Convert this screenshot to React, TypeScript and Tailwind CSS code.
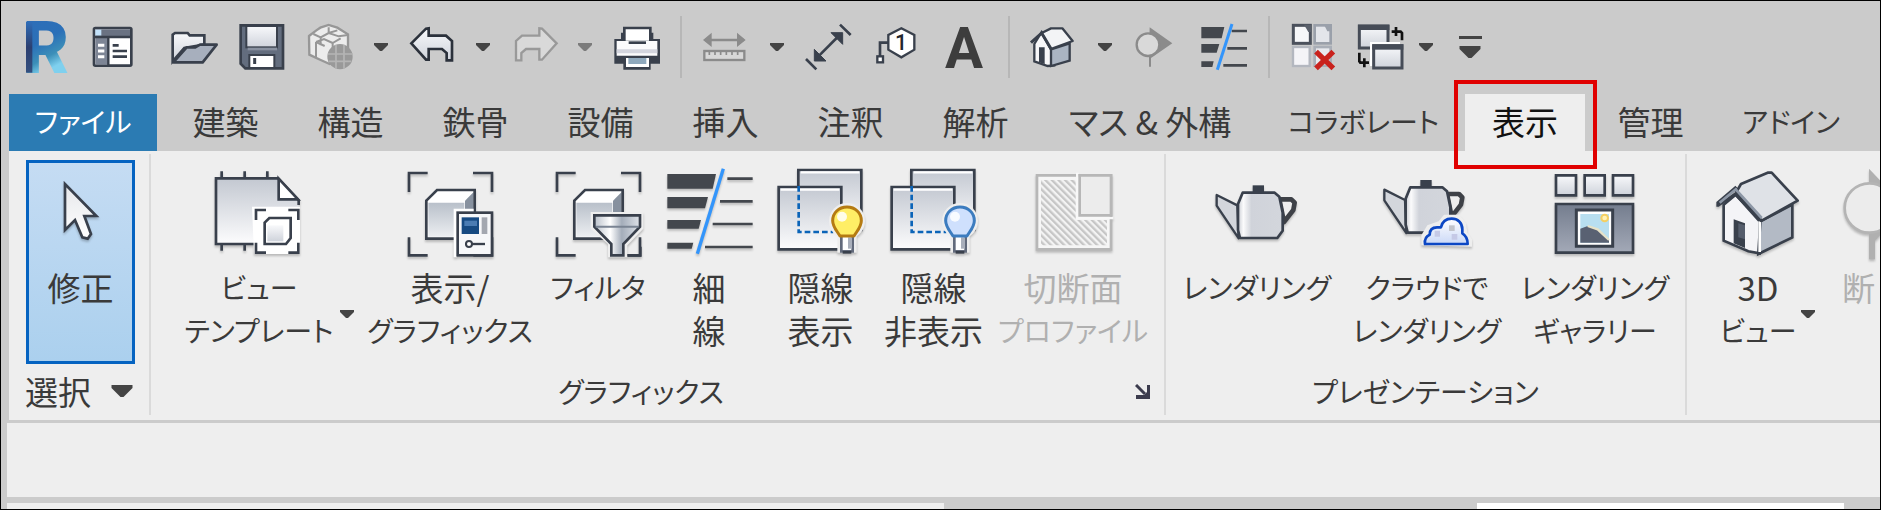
import type { ReactNode } from "react";

const INK = "#39404c";
const GRAY = "#8b8b8b";

type ArtProps = { box: string; children: ReactNode };

function SmallArt({ box, children }: ArtProps) {
  return (
    <svg viewBox={box} className="size-[46px] shrink-0 overflow-visible" fill="none" aria-hidden="true">
      {children}
    </svg>
  );
}

function LargeArt({ box, children }: ArtProps) {
  return (
    <svg
      viewBox={box}
      className="size-[91px] shrink-0 overflow-visible drop-shadow-[0_2px_1px_rgba(0,0,0,0.22)]"
      fill="none"
      aria-hidden="true"
    >
      {children}
    </svg>
  );
}

function Gradients() {
  return (
    <svg className="absolute size-0" aria-hidden="true">
      <defs>
        <linearGradient id="logo" x1="0" y1="0" x2="0.3" y2="1">
          <stop offset="0" stopColor="#2f6db8" />
          <stop offset="0.5" stopColor="#2b70b8" />
          <stop offset="0.7" stopColor="#3c8fb8" />
          <stop offset="0.85" stopColor="#7fd0ee" />
        </linearGradient>
        <linearGradient id="logoDark" x1="0" y1="0" x2="0" y2="1">
          <stop offset="0" stopColor="#2f6db8" />
          <stop offset="0.5" stopColor="#2c3f70" />
          <stop offset="1" stopColor="#34507f" />
        </linearGradient>
        <linearGradient id="face" x1="0" y1="0" x2="0" y2="1">
          <stop offset="0" stopColor="#c3c8d1" />
          <stop offset="1" stopColor="#fcfcfd" />
        </linearGradient>
        <linearGradient id="steel" x1="0" y1="0" x2="0" y2="1">
          <stop offset="0" stopColor="#f8f9fb" />
          <stop offset="1" stopColor="#cfd3db" />
        </linearGradient>
        <linearGradient id="cube" x1="0" y1="0" x2="0" y2="1">
          <stop offset="0" stopColor="#b9c0ca" />
          <stop offset="1" stopColor="#eceef1" />
        </linearGradient>
        <linearGradient id="pot" x1="0" y1="0" x2="1" y2="0">
          <stop offset="0" stopColor="#c9ccd3" />
          <stop offset="0.12" stopColor="#fbfbfc" />
          <stop offset="0.3" stopColor="#d0d3da" />
          <stop offset="1" stopColor="#d3d6dc" />
        </linearGradient>
        <linearGradient id="funnel" x1="0" y1="0" x2="1" y2="0">
          <stop offset="0" stopColor="#b9c0ca" />
          <stop offset="0.35" stopColor="#ffffff" />
          <stop offset="0.6" stopColor="#a4adba" />
          <stop offset="1" stopColor="#dfe3e9" />
        </linearGradient>
        <linearGradient id="slate" x1="0" y1="0" x2="0" y2="1">
          <stop offset="0" stopColor="#747d8e" />
          <stop offset="1" stopColor="#a3a9b7" />
        </linearGradient>
        <linearGradient id="cloud" x1="0" y1="0" x2="0" y2="1">
          <stop offset="0" stopColor="#ffffff" />
          <stop offset="1" stopColor="#cbd9f7" />
        </linearGradient>
        <linearGradient id="pointer" x1="0" y1="0" x2="0" y2="1">
          <stop offset="0" stopColor="#e6e7ea" />
          <stop offset="1" stopColor="#ffffff" />
        </linearGradient>
        <pattern id="hatch" width="14" height="14" patternUnits="userSpaceOnUse" patternTransform="rotate(-45)">
          <rect width="14" height="14" fill="#f3f3f3" />
          <rect width="7" height="14" fill="#c6c6c6" />
        </pattern>
      </defs>
    </svg>
  );
}

/* ---------- quick access icons ---------- */

function LogoIcon() {
  return (
    <SmallArt box="69 66 138 138">
      <text x="68" y="212" fontFamily="Roboto, sans-serif" fontWeight="900" fontSize="214" fill="url(#logo)">R</text>
      <rect x="78" y="60" width="19" height="152" fill="url(#logoDark)" />
    </SmallArt>
  );
}

function PropertiesIcon() {
  return (
    <SmallArt box="270 70 138 138">
      <rect x="279" y="82" width="112" height="113" rx="4" fill="#fff" stroke={INK} strokeWidth="8" />
      <path d="M283 86h104v20H283z" fill="#6a7282" />
      <path d="M283 87h18v18h-18z" fill="#c3e2fa" />
      <path d="M283 112h38v80h-38z" fill="#7d8595" />
      <path d="M279 109h112M322 109v84" stroke={INK} strokeWidth="7" />
      <path d="M291 134h19M291 151h19M291 168h19" stroke="#fff" strokeWidth="9" />
      <path d="M335 134h18M335 151h43M335 168h43" stroke={INK} strokeWidth="8" />
    </SmallArt>
  );
}

function OpenIcon() {
  return (
    <SmallArt box="513 72 138 138">
      <path d="M518 184v-80l7-5h38l6 7h44v28l-60 10z" fill="url(#steel)" stroke={INK} strokeWidth="8" />
      <path d="M520 187l40-45h26l14-8h50l-42 53z" fill="#a7afbd" stroke={INK} strokeWidth="8" strokeLinejoin="round" />
    </SmallArt>
  );
}

function SaveIcon() {
  return (
    <SmallArt box="719 70 138 138">
      <path d="M724 74h127v129H738l-14-14z" fill="#636d7e" stroke={INK} strokeWidth="8" />
      <rect x="741" y="76" width="92" height="64" fill="url(#steel)" stroke={INK} strokeWidth="6" />
      <path d="M745 145h88" stroke="#8991a0" strokeWidth="8" />
      <rect x="750" y="163" width="75" height="39" fill="#fff" stroke={INK} strokeWidth="6" />
      <path d="M766 172v18" stroke={INK} strokeWidth="9" />
    </SmallArt>
  );
}

function CubesIcon() {
  return (
    <SmallArt box="923 68 138 138">
      <path d="M929 104l22-17 12-8 25-8 26 8 32 20v64l-55 25-27-12-34-16z" fill="#ececec" stroke="#979797" strokeWidth="7" />
      <path d="M942 98l22 10 24-13 26-8M964 108v24M988 78v17l30 10 28-4M950 122l24-9 26 12v60M950 122v48M950 122l26 12M1000 125l24-14" stroke="#979797" strokeWidth="6" />
      <circle cx="1022" cy="166" r="38" fill="#999" />
      <path d="M986 158h74M988 180h68M1010 130v72M1034 130v72" stroke="#b5b5b5" strokeWidth="5" />
    </SmallArt>
  );
}

const ARROW_PATH = "M34 128L78 84l8-1v22h52l18 16v58h-16v-22l-14-12H86v32h-8z";

function UndoIcon() {
  return (
    <SmallArt box="27 70 138 138">
      <path d={ARROW_PATH} fill="url(#steel)" stroke="#2b313b" strokeWidth="8" />
    </SmallArt>
  );
}

function RedoIcon() {
  return (
    <SmallArt box="21 70 138 138">
      <g transform="translate(192 0) scale(-1 1)">
        <path d={ARROW_PATH} fill="#d9d9d9" stroke="#999" strokeWidth="7" />
      </g>
    </SmallArt>
  );
}

function PrintIcon() {
  return (
    <SmallArt box="641 70 138 138">
      <path d="M645 115h20V96h97v19h20v74h-28v18h-82v-18h-27z" fill={INK} />
      <path d="M675 82h78v42h-78z" fill="#fff" stroke={INK} strokeWidth="8" />
      <path d="M652 121h122v44H652z" fill="#fbfbfc" />
      <path d="M652 146h122v12H652z" fill="#d3d5de" />
      <path d="M688 126h52" stroke={INK} strokeWidth="8" />
      <path d="M680 172h69v27h-69z" fill="#fff" />
      <path d="M687 172h54v18h-54z" fill="#8fa9bd" />
    </SmallArt>
  );
}

function MeasureIcon() {
  return (
    <SmallArt box="909 70 138 138">
      <path d="M915 118h116" stroke={GRAY} strokeWidth="7" />
      <path d="M909 118l26-22v43zM1037 118l-26-22v43z" fill={GRAY} />
      <rect x="913" y="151" width="120" height="27" fill="#d8d8d8" stroke={GRAY} strokeWidth="7" />
      <path d="M928 154v9M945 154v9M962 154v9M979 154v9M996 154v9M1013 154v9" stroke={GRAY} strokeWidth="5" />
    </SmallArt>
  );
}

function DimensionIcon() {
  return (
    <SmallArt box="15 70 138 138">
      <path d="M52 170l64-64" stroke={INK} strokeWidth="8" />
      <path d="M43 146v35h35zM93 96h35v35z" fill={INK} stroke={INK} strokeWidth="3" />
      <path d="M18 175l31 31M120 72l32 31" stroke={INK} strokeWidth="8" />
    </SmallArt>
  );
}

function TagIcon() {
  return (
    <SmallArt box="222 70 138 138">
      <path d="M270 126h-27v42" stroke={INK} strokeWidth="8" />
      <rect x="235" y="167" width="17" height="18" fill="#fff" stroke={INK} strokeWidth="7" />
      <path d="M307 83l39 20v44l-39 23-39-23v-44z" fill="#fff" stroke={INK} strokeWidth="7" />
      <text x="306" y="149" textAnchor="middle" fontFamily="Roboto, sans-serif" fontWeight="500" fontSize="64" fill="#22262e">1</text>
    </SmallArt>
  );
}

function TextIcon() {
  return (
    <SmallArt box="421 70 138 138">
      <text x="490" y="201" textAnchor="middle" fontFamily="Roboto, sans-serif" fontWeight="700" fontSize="170" fill="#3d3d3d">A</text>
    </SmallArt>
  );
}

function HomeIcon() {
  return (
    <SmallArt box="692 70 138 138">
      <path d="M702 130l22-36 38 52v48l-20 2-40-14z" fill="#f7f7f9" stroke={INK} strokeWidth="7" />
      <path d="M752 146l56-18v52l-56 16z" fill="#aab4c2" stroke={INK} strokeWidth="7" />
      <path d="M724 97l28-14h34l31 38-66 24z" fill="#f3f4f6" stroke={INK} strokeWidth="7" strokeLinejoin="round" />
      <path d="M692 126l32-29 28 47" stroke={INK} strokeWidth="9" />
      <path d="M716 140h17v50l-17-5z" fill={INK} />
    </SmallArt>
  );
}

function SectionIcon() {
  return (
    <SmallArt box="999 70 138 138">
      <path d="M1049 80l68 48-64 44v26h-6v-38z" fill={GRAY} />
      <circle cx="1044" cy="132" r="34" fill="#d9d9d9" stroke={GRAY} strokeWidth="7" />
    </SmallArt>
  );
}

function ThinLinesSmallIcon() {
  return (
    <SmallArt box="1 70 138 138">
      <path d="M2 79h69l-8 34H2zM2 130h54l-8 26H2zM2 182h37l-4 17H2z" fill="#43474d" />
      <path d="M93 91h46M80 143h59M68 194h71" stroke="#43474d" strokeWidth="8" />
      <path d="M94 70L50 207" stroke="#3395fb" strokeWidth="9" />
    </SmallArt>
  );
}

function CloseHiddenIcon() {
  return (
    <SmallArt box="273 70 138 138">
      <rect x="344" y="74" width="48" height="54" fill="#e3e5ea" stroke="#9aa0aa" strokeWidth="8" />
      <rect x="279" y="139" width="50" height="57" fill="#f4f4f7" stroke="#b3b7bf" strokeWidth="7" />
      <rect x="344" y="139" width="48" height="56" fill="#e8e9ee" stroke="#a9aeb7" strokeWidth="8" />
      <rect x="280" y="74" width="51" height="54" fill="#f6f7f9" stroke="#4b515c" strokeWidth="9" />
      <path d="M312 72h22v22h-9z" fill="#5a606b" />
      <path d="M372 72h20v20h-10z" fill="#9aa0aa" />
      <path d="M348 153l52 50M400 153l-52 50" stroke="#c9221d" strokeWidth="16" />
    </SmallArt>
  );
}

function SwitchWindowsIcon() {
  return (
    <SmallArt box="475 70 138 138">
      <rect x="476" y="76" width="86" height="66" fill="url(#steel)" stroke="#464c57" strokeWidth="9" />
      <path d="M472 80h94" stroke="#464c57" strokeWidth="16" />
      <path d="M508 124h90v12h-82v60h-8z" fill="#fff" />
      <rect x="519" y="135" width="85" height="67" fill="url(#steel)" stroke="#464c57" strokeWidth="9" />
      <path d="M515 139h93" stroke="#464c57" strokeWidth="16" />
      <path d="M586 79v27M573 93h27l4 4v22M476 156v26l3 4h26M491 173v27" stroke="#111" strokeWidth="8" />
    </SmallArt>
  );
}

/* ---------- ribbon icons ---------- */

function ModifyIcon() {
  return (
    <LargeArt box="104 54 273 273">
      <path d="M194 102v138l30-30 22 52 16 4 10-14-20-54h36z" fill="url(#pointer)" stroke={INK} strokeWidth="8" />
    </LargeArt>
  );
}

function ViewTemplateIcon() {
  return (
    <LargeArt box="640 54 273 273">
      <path d="M646 85h186l62 66v130H646z" fill="url(#face)" />
      <path d="M760 282H646V85h186l62 66v14" stroke={INK} strokeWidth="8" />
      <path d="M834 86v62h58z" fill="#fff" stroke={INK} strokeWidth="8" />
      <path d="M663 64v20M732 64v20M800 64v20M663 282v20M732 282v20" stroke={INK} strokeWidth="8" />
      <path d="M754 170h144v142H760z" fill="#fff" />
      <path d="M766 210v-30h30M863 180h30v30M893 278v30h-30M796 308h-30v-30" stroke={INK} strokeWidth="8" />
      <path d="M792 218l14-14h64v60l-14 18h-64z" fill="#fff" stroke={INK} strokeWidth="8" />
      <path d="M800 226h48v48h-48z" fill="url(#steel)" />
    </LargeArt>
  );
}

function Cube({ x = 0 }: { x?: number }) {
  return (
    <g transform={`translate(${x} 0)`}>
      <path d="M206 126V69h56M398 69h57v57M455 262v54h-56M262 316h-56v-54" stroke={INK} strokeWidth="8" />
      <path d="M258 152l32-32h113v110l-30 36H258z" fill="#fff" />
      <path d="M264 158h108v102H264z" fill="url(#cube)" />
      <path d="M374 152l26-26v104l-26 26z" fill="#87919f" />
      <path d="M258 152l32-32h113v110l-30 36H258z" stroke={INK} strokeWidth="8" />
    </g>
  );
}

function GraphicsIcon() {
  return (
    <LargeArt box="194 54 273 273">
      <Cube />
      <path d="M340 176h60v10h-50v136h-10z" fill="#fff" />
      <rect x="352" y="188" width="103" height="128" fill="#f6f7f9" stroke={INK} strokeWidth="8" />
      <path d="M364 202h52v50h-52z" fill="#174a82" />
      <path d="M372 212h38v16h-38z" fill="#4b7cb3" />
      <path d="M424 202h17v50h-17z" fill="#a3a7b0" />
      <path d="M374 282h60" stroke={INK} strokeWidth="7" />
      <circle cx="386" cy="282" r="9" fill="#fff" stroke={INK} strokeWidth="6" />
    </LargeArt>
  );
}

function FilterIcon() {
  return (
    <LargeArt box="637 54 273 273">
      <Cube x={443} />
      <path d="M750 186h158v50l-48 50v36h-58v-40l-52-46z" fill="#eee" />
      <path d="M899 290v26h-38" stroke={INK} strokeWidth="8" />
      <path d="M761 196h137v34l-50 52v34h-36v-34l-51-52z" fill="url(#funnel)" stroke={INK} strokeWidth="8" />
      <path d="M765 230h129" stroke="#7a8493" strokeWidth="6" />
    </LargeArt>
  );
}

function ThinLinesIcon() {
  return (
    <LargeArt box="968 54 273 273">
      <path d="M978 72h146l-10 44H978zM978 141h122l-9 34H978zM978 210h101l-7 26H978zM978 278h78l-5 18H978z" fill="#43474d" />
      <path d="M1158 86h76M1136 154h98M1114 222h120M1091 291h143" stroke="#43474d" strokeWidth="8" />
      <path d="M1146 56l-78 255" stroke="#3395fb" strokeWidth="10" />
    </LargeArt>
  );
}

function HiddenLinesIcon({ lit }: { lit: boolean }) {
  const rim = lit ? "#b57b12" : "#3c7cbf";
  const glass = lit ? "#ffee66" : "#cfe0fd";
  return (
    <LargeArt box="75 54 273 273">
      <path d="M145 60h189v180H145z" fill="url(#face)" stroke={INK} strokeWidth="8" />
      <path d="M86 111h188v187H86z" fill="url(#face)" stroke={INK} strokeWidth="8" />
      <path d="M92 119h176M152 67h176" stroke="#fff" strokeWidth="7" />
      <path d="M146 108v138h104" stroke="#0b64b8" strokeWidth="8" strokeDasharray="17 9" />
      <circle cx="291" cy="213" r="54" fill="#eee" />
      <path d="M262 250h58v58h-58z" fill="#eee" />
      <path d="M274 254h34v50h-34z" fill="#fff" stroke="#626a7b" strokeWidth="8" />
      <path d="M294 262h12v34h-12z" fill="#a9afbb" />
      <path d="M278 307h26" stroke={INK} strokeWidth="8" />
      <path d="M291 171c25 0 43 18 43 41 0 18-12 30-22 46h-42c-10-16-22-28-22-46 0-23 18-41 43-41z" fill={glass} stroke={rim} strokeWidth="9" strokeLinejoin="round" />
      <circle cx="276" cy="200" r="15" fill="#fff" opacity="0.85" />
    </LargeArt>
  );
}

function CutProfileIcon() {
  return (
    <LargeArt box="835 54 273 273">
      <path d="M862 76h222v222H862z" fill="#f6f6f6" stroke="#b7b7b7" strokeWidth="8" />
      <path d="M874 90h104v120h94v76H874z" fill="url(#hatch)" />
      <path d="M990 76h94v120h-94z" fill="#ececec" />
      <path d="M983 68v136h108" stroke="#f8f8f8" strokeWidth="8" />
      <path d="M990 76h94v120h-94z" stroke="#b7b7b7" strokeWidth="8" />
    </LargeArt>
  );
}

function Teapot() {
  return (
    <g strokeLinejoin="round">
      <path d="M386 148h36l10 10-4 22-28 36z" fill="#eee" stroke="#3e4147" strokeWidth="14" />
      <path d="M260 166l-62-31v32l66 98z" fill="#d3d6dc" stroke={INK} strokeWidth="7" />
      <path d="M276 128h96l14 12 10 48v54l-16 22H268l-6-24v-78z" fill="url(#pot)" stroke={INK} strokeWidth="8" />
      <path d="M306 106h34v20h-34z" fill={INK} />
    </g>
  );
}

function RenderIcon() {
  return (
    <LargeArt box="184 54 273 273">
      <Teapot />
    </LargeArt>
  );
}

function CloudRenderIcon() {
  return (
    <LargeArt box="694 54 273 273">
      <g transform="translate(503 -16)">
        <Teapot />
      </g>
      <path d="M812 286v-30l18-30 34-12 16-20h46l20 26 4 28 14 20v22z" fill="#eee" />
      <path d="M823 282c-2-16 4-24 14-28 0-14 8-22 22-22h12c4-18 14-26 32-26s32 12 32 32v12c10 6 16 16 16 32z" fill="url(#cloud)" stroke="#0c47c4" strokeWidth="8" strokeLinejoin="round" />
      <path d="M852 242h16v18h-16zM903 252h17v17h-17z" fill="#c5c9e6" />
      <path d="M895 226h17v17h-17z" fill="#c2c4cb" />
    </LargeArt>
  );
}

function GalleryIcon() {
  return (
    <LargeArt box="146 54 273 273">
      <path d="M164 76h60v60h-60zM250 76h60v60h-60zM335 76h60v60h-60z" fill="url(#steel)" stroke={INK} strokeWidth="8" />
      <path d="M164 162h231v146H164z" fill="url(#slate)" stroke={INK} strokeWidth="8" />
      <path d="M225 180h109v109H225z" fill="#fff" stroke={INK} strokeWidth="9" />
      <path d="M237 192h86v86h-86z" fill="#b8dff0" />
      <path d="M237 236l22-8 30 10 34 32v8h-86z" fill="#596172" />
      <path d="M259 228l30 10 34 32" stroke="#e6e2c8" strokeWidth="7" />
      <circle cx="310" cy="204" r="10" fill="#fff3b8" stroke="#f5cf62" strokeWidth="6" />
    </LargeArt>
  );
}

function House3DIcon() {
  return (
    <LargeArt box="636 54 273 273">
      <path d="M668 164l36-30 72 80v96l-34-6-74-32z" fill="#f4f4f7" stroke={INK} strokeWidth="8" />
      <path d="M778 214l96-50v98l-102 50z" fill="#b3bac5" stroke={INK} strokeWidth="8" />
      <path d="M776 214v92" stroke="#fff" strokeWidth="8" />
      <path d="M698 208l34 12v74l-34-14z" fill={INK} />
      <path d="M712 220l20 6v42l-20-6z" fill="#555d6c" />
      <path d="M706 126l14-24 80-34h12l78 84-108 60z" fill="#dfe2e7" stroke={INK} strokeWidth="8" strokeLinejoin="round" />
      <path d="M650 170v-12l56-48M652 166l50-34 80 82" stroke={INK} strokeWidth="8" />
      <path d="M656 158l48-40 78 86" stroke="#8d97a6" strokeWidth="8" />
    </LargeArt>
  );
}

function SectionLargeIcon() {
  return (
    <LargeArt box="1026 54 273 273">
      <path d="M1107 56l110 116-92 100v56h-18z" fill="#b0b0b0" />
      <circle cx="1108" cy="174" r="74" fill="#ececec" stroke="#b4b4b4" strokeWidth="8" />
    </LargeArt>
  );
}

/* ---------- shared parts ---------- */

function Caret({ faded = false, wide = false }: { faded?: boolean; wide?: boolean }) {
  return (
    <svg viewBox="0 0 14 8" className={wide ? "h-3 w-[22px]" : "h-2 w-[14px]"} aria-hidden="true">
      <path d="M0 0h14v2L8 8H6L0 2z" fill={faded ? "#7c7c7c" : "#444"} />
    </svg>
  );
}

function ToolButton({ label, children }: { label: string; children: ReactNode }) {
  return (
    <button aria-label={label} className="flex h-[70px] w-[68px] shrink-0 items-center justify-center">
      {children}
    </button>
  );
}

function ToolCaret({ label, faded }: { label: string; faded?: boolean }) {
  return (
    <button aria-label={label} className="flex h-[70px] w-[34px] shrink-0 items-center justify-center">
      <Caret faded={faded} />
    </button>
  );
}

function ToolDivider() {
  return <div className="mx-[10px] h-[62px] w-[2px] shrink-0 bg-[#b7b7b7]" />;
}

const KANA = /^[\u3041-\u30ff\n]+$/;

function Line({ text }: { text: string }) {
  return (
    <span
      className={
        KANA.test(text)
          ? "block text-[28px] leading-[43px] whitespace-pre-line"
          : "block text-[33px] leading-[43px] whitespace-pre-line"
      }
    >
      {text}
    </span>
  );
}

type CommandProps = { width: string; lines: string[]; icon: ReactNode; disabled?: boolean };

function Command({ width, lines, icon, disabled = false }: CommandProps) {
  return (
    <button
      disabled={disabled}
      className={`${width} flex shrink-0 flex-col items-center gap-[7px] ${disabled ? "text-[#b0b0b0]" : ""}`}
    >
      {icon}
      <span className="block">
        {lines.map((line) => (
          <Line key={line} text={line} />
        ))}
      </span>
    </button>
  );
}

function Panel({ width, title, children }: { width: string; title: ReactNode; children: ReactNode }) {
  return (
    <section className={`${width} flex flex-col border-r-2 border-[#dadada]`}>
      <div className="flex h-[213px] items-start pt-[14px]">{children}</div>
      <div className="flex h-[48px] items-center justify-center">{title}</div>
    </section>
  );
}

const TABS = ["建築", "構造", "鉄骨", "設備", "挿入", "注釈", "解析"];

export default function App() {
  return (
    <div
      lang="ja"
      className="relative flex w-full flex-col overflow-hidden border border-black bg-[#cbcbcb] font-['Noto_Sans_CJK_JP',sans-serif] text-[#3a3a3a] [font-feature-settings:'palt']"
    >
      <Gradients />

      <header className="flex h-[93px] items-center pb-[2px] pl-[11px]">
        <ToolButton label="アプリケーション"><LogoIcon /></ToolButton>
        <ToolButton label="プロパティ"><PropertiesIcon /></ToolButton>
        <div className="w-3 shrink-0" />
        <ToolButton label="開く"><OpenIcon /></ToolButton>
        <ToolButton label="保存"><SaveIcon /></ToolButton>
        <ToolButton label="同期"><CubesIcon /></ToolButton>
        <ToolCaret label="同期のオプション" />
        <ToolButton label="元に戻す"><UndoIcon /></ToolButton>
        <ToolCaret label="元に戻す履歴" />
        <ToolButton label="やり直し"><RedoIcon /></ToolButton>
        <ToolCaret label="やり直し履歴" faded />
        <ToolButton label="印刷"><PrintIcon /></ToolButton>
        <ToolDivider />
        <ToolButton label="計測"><MeasureIcon /></ToolButton>
        <ToolCaret label="計測のオプション" />
        <ToolButton label="寸法"><DimensionIcon /></ToolButton>
        <ToolButton label="タグ"><TagIcon /></ToolButton>
        <ToolButton label="文字"><TextIcon /></ToolButton>
        <ToolDivider />
        <ToolButton label="3D ビュー"><HomeIcon /></ToolButton>
        <ToolCaret label="3D ビューのオプション" />
        <ToolButton label="断面"><SectionIcon /></ToolButton>
        <ToolButton label="細線"><ThinLinesSmallIcon /></ToolButton>
        <ToolDivider />
        <ToolButton label="非表示ウィンドウを閉じる"><CloseHiddenIcon /></ToolButton>
        <ToolButton label="ウィンドウ切り替え"><SwitchWindowsIcon /></ToolButton>
        <button aria-label="ウィンドウ一覧" className="flex h-[70px] w-5 shrink-0 items-center justify-center">
          <Caret />
        </button>
        <button aria-label="カスタマイズ" className="flex h-[70px] w-[68px] shrink-0 flex-col items-center justify-center gap-[7px]">
          <span className="h-[3px] w-[23px] bg-[#444]" />
          <Caret wide />
        </button>
      </header>

      <nav className="flex h-[57px] items-stretch pl-2 text-[33px] leading-[50px] whitespace-nowrap">
        <button className="mr-[6px] w-[148px] shrink-0 bg-[#2b7bb3] pb-1 text-[28px] text-white">ファイル</button>
        {TABS.map((tab) => (
          <button key={tab} className="w-[125px] shrink-0 pb-1">{tab}</button>
        ))}
        <button className="w-[224px] shrink-0 pb-1">マス &amp; 外構</button>
        <button className="w-[203px] shrink-0 pb-1 text-[28px]">コラボレート</button>
        <button className="relative w-[120px] shrink-0 bg-[#eee] pb-1 text-[#111]">
          表示
          <span className="absolute -top-[14px] -right-3 -bottom-[18px] -left-[11px] z-10 border-4 border-[#e00000]" />
        </button>
        <button className="ml-[3px] w-[125px] shrink-0 pb-1">管理</button>
        <button className="w-[156px] shrink-0 pb-1 text-[28px]">アドイン</button>
      </nav>

      <main className="ml-2 flex bg-[#eee] pt-[3px] pb-[5px]">
        <Panel
          width="w-[142px] shrink-0"
          title={
            <button className="flex items-center gap-5 text-[33px] leading-[43px]">
              選択
              <Caret wide />
            </button>
          }
        >
          <button className="-mt-2 ml-[17px] flex h-[204px] w-[109px] shrink-0 flex-col items-center gap-[7px] border-[3px] border-[#0563c1] bg-linear-to-b from-[#c5dcf3] to-[#abd0ee] pt-[5px]">
            <ModifyIcon />
            <Line text="修正" />
          </button>
        </Panel>

        <Panel
          width="w-[1015px] shrink-0"
          title={
            <div className="flex w-full items-center">
              <span className="flex-1 pr-[4px] text-center text-[28px] leading-[43px]">グラフィックス</span>
              <button aria-label="グラフィックスの設定" className="mr-[14px] size-[15px]">
                <svg viewBox="0 0 15 15" aria-hidden="true">
                  <path d="M1 1l9 9" stroke="#3b3b4d" strokeWidth="3" />
                  <path d="M15 1v14H1v-4h8l3-3V1z" fill="#3b3b4d" />
                </svg>
              </button>
            </div>
          }
        >
          <Command width="ml-[19px] w-[178px]" lines={["ビュー", "テンプレート"]} icon={<ViewTemplateIcon />} />
          <span className="-ml-2 mt-[142px] w-[18px] shrink-0"><Caret /></span>
          <Command width="w-[184px]" lines={["表示/", "グラフィックス"]} icon={<GraphicsIcon />} />
          <Command width="w-[112px]" lines={["フィルタ"]} icon={<FilterIcon />} />
          <Command width="w-[110px]" lines={["細\n線"]} icon={<ThinLinesIcon />} />
          <Command width="w-[113px]" lines={["隠線\n表示"]} icon={<HiddenLinesIcon lit />} />
          <Command width="w-[113px]" lines={["隠線\n非表示"]} icon={<HiddenLinesIcon lit={false} />} />
          <Command width="w-[166px]" lines={["切断面", "プロファイル"]} icon={<CutProfileIcon />} disabled />
        </Panel>

        <Panel
          width="w-[521px] shrink-0"
          title={<span className="text-[28px] leading-[43px]">プレゼンテーション</span>}
        >
          <Command width="ml-[6px] w-[170px]" lines={["レンダリング"]} icon={<RenderIcon />} />
          <Command width="w-[170px]" lines={["クラウドで", "レンダリング"]} icon={<CloudRenderIcon />} />
          <Command width="w-[166px]" lines={["レンダリング\nギャラリー"]} icon={<GalleryIcon />} />
        </Panel>

        <section className="flex min-w-0 flex-1 items-start overflow-hidden pt-[14px]">
          <Command width="ml-4 w-[110px]" lines={["3D", "ビュー"]} icon={<House3DIcon />} />
          <span className="-ml-3 mt-[142px] w-[14px] shrink-0"><Caret /></span>
          <button disabled className="ml-[27px] flex shrink-0 flex-col items-start gap-[7px] text-[#b0b0b0]">
            <SectionLargeIcon />
            <Line text="断" />
          </button>
        </section>
      </main>

      <div className="mt-[3px] ml-[6px] h-[74px] bg-[#eee]" />

      <footer className="mt-[6px] flex h-[6px] justify-between pr-[36px] pl-[6px]">
        <div className="w-[51%] bg-[#eee]" />
        <div className="w-1/5 bg-white" />
      </footer>
    </div>
  );
}
